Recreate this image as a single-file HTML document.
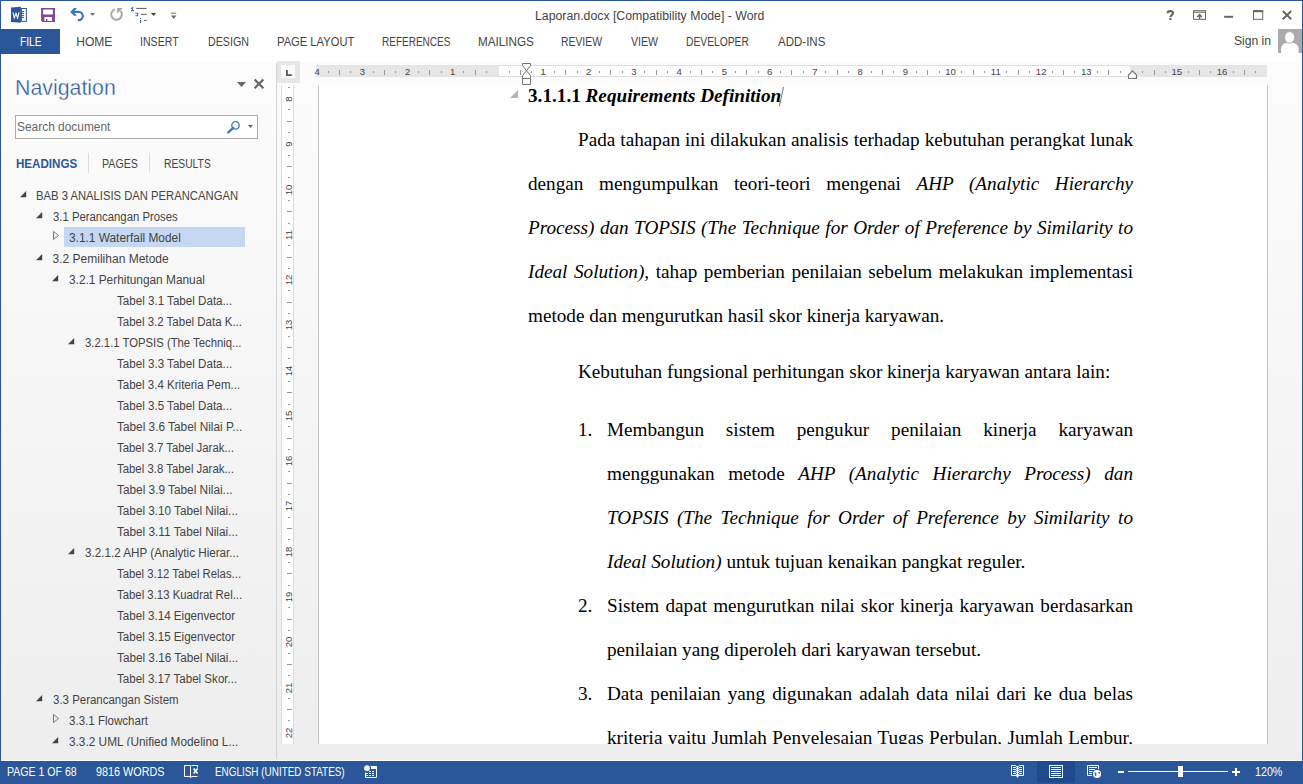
<!DOCTYPE html><html><head><meta charset="utf-8"><title>Word</title><style>
*{margin:0;padding:0;box-sizing:border-box}
html,body{width:1303px;height:784px;overflow:hidden;background:#fff}
body{position:relative;font-family:"Liberation Sans",sans-serif;color:#444}
.abs{position:absolute;white-space:nowrap}
.doc{position:absolute;white-space:nowrap;font-family:"Liberation Serif",serif;font-size:19.2px;line-height:22px;color:#000}
.rn{position:absolute;font-size:9.5px;line-height:10px;color:#444;text-align:center}
.tk{position:absolute;background:#9a9a9a}
</style></head><body>
<div class="abs" style="left:0;top:62px;width:1303px;height:698px;background:linear-gradient(#fcfcfc,#eeeeee)"></div>
<div class="abs" style="left:0;top:0;width:1303px;height:1px;background:#2b579a"></div>
<div class="abs" style="left:0;top:0;width:1px;height:784px;background:#2b579a"></div>
<div class="abs" style="left:1302px;top:0;width:1px;height:784px;background:#2b579a"></div>
<svg class="abs" style="left:0;top:0" width="200" height="29">
<path d="M11 7.6 L20.9 6.8 L20.9 22.7 L11 21.9 Z" fill="#2b579a"/>
<rect x="21.4" y="8.5" width="5" height="12.8" fill="#fff" stroke="#2b579a" stroke-width="1"/>
<path d="M21 11.4 H24 M21 13.4 H24 M21 15.4 H24 M21 17.4 H24" stroke="#2b579a" stroke-width="1"/>
<path d="M12.9 12.4 L14.3 18 L16 13.4 L17.6 18 L19 12.4" fill="none" stroke="#fff" stroke-width="1.1"/>
<path d="M41.1 8 H55 V22 H42.4 L41.1 20.7 Z" fill="#80489d"/>
<rect x="43.1" y="9.5" width="9.8" height="5" rx="0.8" fill="#fff"/>
<rect x="44.4" y="17" width="7.6" height="4" fill="#fff"/>
<rect x="46" y="19" width="1.4" height="2" fill="#80489d"/>
<path d="M74 8.1 L77 8.1 L73.6 11.9 L77 15.7 L74 15.7 L70.1 11.9 Z" fill="#3d77b8"/>
<path d="M72.5 11.9 H78.7 A4.1 4.1 0 0 1 78.7 20.1 H77.8" fill="none" stroke="#3d77b8" stroke-width="2.2"/>
<path d="M90 13 H95 L92.5 15.8 Z" fill="#6a6a6a"/>
<path d="M115.1 9.4 A5.3 5.3 0 1 0 120.4 10.9" fill="none" stroke="#a8a8a8" stroke-width="2"/>
<path d="M117.1 8.1 L122.8 8.1 L117.1 13.7 Z" fill="#a8a8a8"/>
<path d="M131 8.6 L132.6 7.5 V11 M131 10.6 H134" fill="none" stroke="#3d77b8" stroke-width="1.1"/>
<path d="M135.3 13.3 H137.6 V15.7 H135.4" fill="none" stroke="#3d77b8" stroke-width="1.1"/>
<path d="M140.5 18 V19 M140.5 20 V23" stroke="#3d77b8" stroke-width="1.3"/>
<path d="M136.2 8.4 H146.7 M141 14.3 H146.7 M144 20.4 H146.7" stroke="#595959" stroke-width="1"/>
<path d="M150.9 13 H156.2 L153.55 16 Z" fill="#444"/>
<path d="M171 13.2 H176.2" stroke="#6a6a6a" stroke-width="1"/>
<path d="M171 15.6 H176.4 L173.7 19 Z" fill="#6a6a6a"/>
</svg>
<svg class="abs" style="left:1150px;top:0" width="152" height="29">
<path d="M17.6 13.2 C17.6 10.7 23 10.4 23 13.1 C23 15.4 20.4 15 20.4 17.3" fill="none" stroke="#666" stroke-width="2.2"/>
<rect x="19.3" y="18.2" width="2.3" height="1.8" fill="#666"/>
<rect x="43.6" y="10.7" width="12" height="8.6" fill="none" stroke="#666" stroke-width="1"/>
<path d="M43.6 12.2 H55.6" stroke="#666" stroke-width="1"/>
<path d="M49.6 19.2 V14.6 M47.3 16.9 L49.6 14.6 L51.9 16.9" fill="none" stroke="#666" stroke-width="1.4"/>
<rect x="74.1" y="15.8" width="9" height="2" fill="#666"/>
<rect x="103.5" y="10.7" width="9.2" height="8.6" fill="none" stroke="#666" stroke-width="1"/>
<rect x="103" y="10.2" width="10.2" height="2" fill="#666"/>
<path d="M132.8 11 L141.2 19.2 M141.2 11 L132.8 19.2" stroke="#666" stroke-width="1.9"/>
</svg>
<svg class="abs" style="left:1278px;top:29px" width="24" height="24">
<rect x="0" y="0" width="24" height="24" fill="#ababab"/>
<path d="M3 24 V20.5 C3 15.8 6 13.6 11.6 13.6 C17.2 13.6 20.6 15.8 20.6 20.5 V24 Z" fill="#fff"/>
<ellipse cx="11.6" cy="8.4" rx="5" ry="5.8" fill="#fff" stroke="#ababab" stroke-width="0.9"/>
</svg>
<div class="abs" style="left:535.38px;top:10.24px;font:normal normal 12px/12px 'Liberation Sans',sans-serif;color:#444;transform:scaleX(1.0248);transform-origin:0 0;">Laporan.docx [Compatibility Mode] - Word</div>
<div class="abs" style="left:1px;top:29px;width:59px;height:25px;background:#2b579a"></div>
<div class="abs" style="left:19.55px;top:35.54px;font:normal normal 12px/12px 'Liberation Sans',sans-serif;color:#fff;transform:scaleX(0.8547);transform-origin:0 0;">FILE</div>
<div class="abs" style="left:76.30px;top:35.54px;font:normal normal 12px/12px 'Liberation Sans',sans-serif;color:#444;">HOME</div>
<div class="abs" style="left:140.12px;top:35.54px;font:normal normal 12px/12px 'Liberation Sans',sans-serif;color:#444;transform:scaleX(0.8847);transform-origin:0 0;">INSERT</div>
<div class="abs" style="left:207.61px;top:35.54px;font:normal normal 12px/12px 'Liberation Sans',sans-serif;color:#444;transform:scaleX(0.8909);transform-origin:0 0;">DESIGN</div>
<div class="abs" style="left:276.67px;top:35.54px;font:normal normal 12px/12px 'Liberation Sans',sans-serif;color:#444;transform:scaleX(0.9325);transform-origin:0 0;">PAGE LAYOUT</div>
<div class="abs" style="left:381.97px;top:35.54px;font:normal normal 12px/12px 'Liberation Sans',sans-serif;color:#444;transform:scaleX(0.8335);transform-origin:0 0;">REFERENCES</div>
<div class="abs" style="left:478.03px;top:35.54px;font:normal normal 12px/12px 'Liberation Sans',sans-serif;color:#444;transform:scaleX(0.9722);transform-origin:0 0;">MAILINGS</div>
<div class="abs" style="left:561.14px;top:35.54px;font:normal normal 12px/12px 'Liberation Sans',sans-serif;color:#444;transform:scaleX(0.8649);transform-origin:0 0;">REVIEW</div>
<div class="abs" style="left:630.80px;top:35.54px;font:normal normal 12px/12px 'Liberation Sans',sans-serif;color:#444;transform:scaleX(0.8820);transform-origin:0 0;">VIEW</div>
<div class="abs" style="left:686.34px;top:35.54px;font:normal normal 12px/12px 'Liberation Sans',sans-serif;color:#444;transform:scaleX(0.8571);transform-origin:0 0;">DEVELOPER</div>
<div class="abs" style="left:778.20px;top:35.54px;font:normal normal 12px/12px 'Liberation Sans',sans-serif;color:#444;transform:scaleX(0.9600);transform-origin:0 0;">ADD-INS</div>
<div class="abs" style="left:1234.24px;top:34.54px;font:normal normal 12px/12px 'Liberation Sans',sans-serif;color:#444;transform:scaleX(1.0099);transform-origin:0 0;">Sign in</div>
<div class="abs" style="left:14.90px;top:76.58px;font:normal normal 22px/22px 'Liberation Sans',sans-serif;color:#2b579a;transform:scaleX(0.9697);transform-origin:0 0;-webkit-text-stroke:0.35px #fcfcfc;">Navigation</div>
<div class="abs" style="left:15px;top:115px;width:243px;height:24px;border:1px solid #ababab;background:#fff"></div>
<div class="abs" style="left:17.46px;top:120.84px;font:normal normal 12px/12px 'Liberation Sans',sans-serif;color:#666;transform:scaleX(0.9930);transform-origin:0 0;">Search document</div>
<svg class="abs" style="left:225px;top:72px" width="50" height="24">
<path d="M12 10 H21 L16.5 15 Z" fill="#666"/>
<path d="M29.6 7.5 L38.4 16.3 M38.4 7.5 L29.6 16.3" stroke="#666" stroke-width="2.3"/>
</svg>
<svg class="abs" style="left:220px;top:115px" width="40" height="24">
<circle cx="15.5" cy="10.4" r="3.7" fill="none" stroke="#3c77b9" stroke-width="1.3"/>
<path d="M13.2 12.8 L8.3 17.4" stroke="#3c77b9" stroke-width="2.3" stroke-linecap="round"/>
<path d="M28 10 H33 L30.5 13 Z" fill="#666"/>
</svg>
<div class="abs" style="left:15.78px;top:157.64px;font:normal bold 12px/12px 'Liberation Sans',sans-serif;color:#2b579a;transform:scaleX(0.9661);transform-origin:0 0;">HEADINGS</div>
<div class="abs" style="left:88px;top:153px;width:1px;height:20px;background:#ddd"></div>
<div class="abs" style="left:101.51px;top:157.74px;font:normal normal 12px/12px 'Liberation Sans',sans-serif;color:#444;transform:scaleX(0.8872);transform-origin:0 0;">PAGES</div>
<div class="abs" style="left:149px;top:153px;width:1px;height:20px;background:#ddd"></div>
<div class="abs" style="left:163.54px;top:157.74px;font:normal normal 12px/12px 'Liberation Sans',sans-serif;color:#444;transform:scaleX(0.8585);transform-origin:0 0;">RESULTS</div>
<div class="abs" style="left:0px;top:185px;width:276px;height:561px;overflow:hidden">
<div class="abs" style="left:64px;top:42px;width:181px;height:20px;background:#c5d7f1"></div>
<div class="abs" style="left:36.16px;top:4.84px;font:normal normal 12px/12px 'Liberation Sans',sans-serif;color:#444;transform:scaleX(0.9379);transform-origin:0 0;">BAB 3 ANALISIS DAN PERANCANGAN</div>
<svg class="abs" style="left:20px;top:6px" width="8" height="8"><path d="M6.2 0 L6.2 6.2 L0 6.2 Z" fill="#444"/></svg>
<div class="abs" style="left:52.63px;top:25.84px;font:normal normal 12px/12px 'Liberation Sans',sans-serif;color:#444;transform:scaleX(0.9435);transform-origin:0 0;">3.1 Perancangan Proses</div>
<svg class="abs" style="left:36px;top:27px" width="8" height="8"><path d="M6.2 0 L6.2 6.2 L0 6.2 Z" fill="#444"/></svg>
<div class="abs" style="left:68.60px;top:46.84px;font:normal normal 12px/12px 'Liberation Sans',sans-serif;color:#444;transform:scaleX(0.9901);transform-origin:0 0;">3.1.1 Waterfall Model</div>
<svg class="abs" style="left:52.7px;top:46.4px" width="8" height="10"><path d="M0.5 0.5 L5.5 4.5 L0.5 8.5 Z" fill="none" stroke="#777"/></svg>
<div class="abs" style="left:52.60px;top:67.84px;font:normal normal 12px/12px 'Liberation Sans',sans-serif;color:#444;">3.2 Pemilihan Metode</div>
<svg class="abs" style="left:36px;top:69px" width="8" height="8"><path d="M6.2 0 L6.2 6.2 L0 6.2 Z" fill="#444"/></svg>
<div class="abs" style="left:68.61px;top:88.84px;font:normal normal 12px/12px 'Liberation Sans',sans-serif;color:#444;transform:scaleX(0.9890);transform-origin:0 0;">3.2.1 Perhitungan Manual</div>
<svg class="abs" style="left:52px;top:90px" width="8" height="8"><path d="M6.2 0 L6.2 6.2 L0 6.2 Z" fill="#444"/></svg>
<div class="abs" style="left:116.86px;top:109.84px;font:normal normal 12px/12px 'Liberation Sans',sans-serif;color:#444;transform:scaleX(0.9669);transform-origin:0 0;">Tabel 3.1 Tabel Data...</div>
<div class="abs" style="left:116.86px;top:130.84px;font:normal normal 12px/12px 'Liberation Sans',sans-serif;color:#444;transform:scaleX(0.9575);transform-origin:0 0;">Tabel 3.2 Tabel Data K...</div>
<div class="abs" style="left:84.63px;top:151.84px;font:normal normal 12px/12px 'Liberation Sans',sans-serif;color:#444;transform:scaleX(0.9418);transform-origin:0 0;">3.2.1.1 TOPSIS (The Techniq...</div>
<svg class="abs" style="left:68px;top:153px" width="8" height="8"><path d="M6.2 0 L6.2 6.2 L0 6.2 Z" fill="#444"/></svg>
<div class="abs" style="left:116.86px;top:172.84px;font:normal normal 12px/12px 'Liberation Sans',sans-serif;color:#444;transform:scaleX(0.9669);transform-origin:0 0;">Tabel 3.3 Tabel Data...</div>
<div class="abs" style="left:116.86px;top:193.84px;font:normal normal 12px/12px 'Liberation Sans',sans-serif;color:#444;transform:scaleX(0.9617);transform-origin:0 0;">Tabel 3.4 Kriteria Pem...</div>
<div class="abs" style="left:116.86px;top:214.84px;font:normal normal 12px/12px 'Liberation Sans',sans-serif;color:#444;transform:scaleX(0.9669);transform-origin:0 0;">Tabel 3.5 Tabel Data...</div>
<div class="abs" style="left:116.85px;top:235.84px;font:normal normal 12px/12px 'Liberation Sans',sans-serif;color:#444;transform:scaleX(0.9861);transform-origin:0 0;">Tabel 3.6 Tabel Nilai P...</div>
<div class="abs" style="left:116.86px;top:256.84px;font:normal normal 12px/12px 'Liberation Sans',sans-serif;color:#444;transform:scaleX(0.9492);transform-origin:0 0;">Tabel 3.7 Tabel Jarak...</div>
<div class="abs" style="left:116.86px;top:277.84px;font:normal normal 12px/12px 'Liberation Sans',sans-serif;color:#444;transform:scaleX(0.9492);transform-origin:0 0;">Tabel 3.8 Tabel Jarak...</div>
<div class="abs" style="left:116.85px;top:298.84px;font:normal normal 12px/12px 'Liberation Sans',sans-serif;color:#444;transform:scaleX(0.9853);transform-origin:0 0;">Tabel 3.9 Tabel Nilai...</div>
<div class="abs" style="left:116.86px;top:319.84px;font:normal normal 12px/12px 'Liberation Sans',sans-serif;color:#444;transform:scaleX(0.9760);transform-origin:0 0;">Tabel 3.10 Tabel Nilai...</div>
<div class="abs" style="left:116.85px;top:340.84px;font:normal normal 12px/12px 'Liberation Sans',sans-serif;color:#444;transform:scaleX(0.9840);transform-origin:0 0;">Tabel 3.11 Tabel Nilai...</div>
<div class="abs" style="left:84.61px;top:361.84px;font:normal normal 12px/12px 'Liberation Sans',sans-serif;color:#444;transform:scaleX(0.9718);transform-origin:0 0;">3.2.1.2 AHP (Analytic Hierar...</div>
<svg class="abs" style="left:68px;top:363px" width="8" height="8"><path d="M6.2 0 L6.2 6.2 L0 6.2 Z" fill="#444"/></svg>
<div class="abs" style="left:116.86px;top:382.84px;font:normal normal 12px/12px 'Liberation Sans',sans-serif;color:#444;transform:scaleX(0.9454);transform-origin:0 0;">Tabel 3.12 Tabel Relas...</div>
<div class="abs" style="left:116.86px;top:403.84px;font:normal normal 12px/12px 'Liberation Sans',sans-serif;color:#444;transform:scaleX(0.9476);transform-origin:0 0;">Tabel 3.13 Kuadrat Rel...</div>
<div class="abs" style="left:116.86px;top:424.84px;font:normal normal 12px/12px 'Liberation Sans',sans-serif;color:#444;transform:scaleX(0.9679);transform-origin:0 0;">Tabel 3.14 Eigenvector</div>
<div class="abs" style="left:116.86px;top:445.84px;font:normal normal 12px/12px 'Liberation Sans',sans-serif;color:#444;transform:scaleX(0.9679);transform-origin:0 0;">Tabel 3.15 Eigenvector</div>
<div class="abs" style="left:116.86px;top:466.84px;font:normal normal 12px/12px 'Liberation Sans',sans-serif;color:#444;transform:scaleX(0.9792);transform-origin:0 0;">Tabel 3.16 Tabel Nilai...</div>
<div class="abs" style="left:116.86px;top:487.84px;font:normal normal 12px/12px 'Liberation Sans',sans-serif;color:#444;transform:scaleX(0.9652);transform-origin:0 0;">Tabel 3.17 Tabel Skor...</div>
<div class="abs" style="left:52.62px;top:508.84px;font:normal normal 12px/12px 'Liberation Sans',sans-serif;color:#444;transform:scaleX(0.9559);transform-origin:0 0;">3.3 Perancangan Sistem</div>
<svg class="abs" style="left:36px;top:510px" width="8" height="8"><path d="M6.2 0 L6.2 6.2 L0 6.2 Z" fill="#444"/></svg>
<div class="abs" style="left:68.62px;top:529.84px;font:normal normal 12px/12px 'Liberation Sans',sans-serif;color:#444;transform:scaleX(0.9632);transform-origin:0 0;">3.3.1 Flowchart</div>
<svg class="abs" style="left:52.7px;top:529.4px" width="8" height="10"><path d="M0.5 0.5 L5.5 4.5 L0.5 8.5 Z" fill="none" stroke="#777"/></svg>
<div class="abs" style="left:68.61px;top:550.84px;font:normal normal 12px/12px 'Liberation Sans',sans-serif;color:#444;transform:scaleX(0.9865);transform-origin:0 0;">3.3.2 UML (Unified Modeling L...</div>
<svg class="abs" style="left:52px;top:552px" width="8" height="8"><path d="M6.2 0 L6.2 6.2 L0 6.2 Z" fill="#444"/></svg>
</div>
<div class="abs" style="left:276px;top:63px;width:1px;height:696px;background:#d4d4d4"></div>
<div class="abs" style="left:277px;top:61px;width:23px;height:22px;background:#e6e6e6"></div>
<div class="abs" style="left:281px;top:65px;width:14px;height:13px;background:#fafafa"></div>
<svg class="abs" style="left:285px;top:70px" width="8" height="7"><path d="M1.9 0 V5.1 H6.8" fill="none" stroke="#555" stroke-width="1.8"/></svg>
<div class="abs" style="left:316px;top:65px;width:951px;height:12px;background:#e6e6e6"></div>
<div class="abs" style="left:499px;top:65px;width:631px;height:12px;background:#fff;border-top:1px solid #dedede;border-bottom:1px solid #dedede"></div>

<div class="abs" style="left:314.44px;top:67.06px;font:normal normal 9.5px/9.5px 'Liberation Sans',sans-serif;color:#444;">4</div>
<div class="tk" style="left:328px;top:71px;width:1px;height:2px"></div>
<div class="tk" style="left:339px;top:70px;width:1px;height:5px"></div>
<div class="tk" style="left:350px;top:71px;width:1px;height:2px"></div>

<div class="abs" style="left:359.70px;top:67.06px;font:normal normal 9.5px/9.5px 'Liberation Sans',sans-serif;color:#444;">3</div>
<div class="tk" style="left:373px;top:71px;width:1px;height:2px"></div>
<div class="tk" style="left:384px;top:70px;width:1px;height:5px"></div>
<div class="tk" style="left:395px;top:71px;width:1px;height:2px"></div>

<div class="abs" style="left:404.96px;top:67.06px;font:normal normal 9.5px/9.5px 'Liberation Sans',sans-serif;color:#444;">2</div>
<div class="tk" style="left:418px;top:71px;width:1px;height:2px"></div>
<div class="tk" style="left:429px;top:70px;width:1px;height:5px"></div>
<div class="tk" style="left:441px;top:71px;width:1px;height:2px"></div>

<div class="abs" style="left:450.09px;top:67.06px;font:normal normal 9.5px/9.5px 'Liberation Sans',sans-serif;color:#444;">1</div>
<div class="tk" style="left:463px;top:71px;width:1px;height:2px"></div>
<div class="tk" style="left:475px;top:70px;width:1px;height:5px"></div>
<div class="tk" style="left:486px;top:71px;width:1px;height:2px"></div>
<div class="tk" style="left:509px;top:71px;width:1px;height:2px"></div>
<div class="tk" style="left:520px;top:70px;width:1px;height:5px"></div>
<div class="tk" style="left:531px;top:71px;width:1px;height:2px"></div>

<div class="abs" style="left:540.61px;top:67.06px;font:normal normal 9.5px/9.5px 'Liberation Sans',sans-serif;color:#444;">1</div>
<div class="tk" style="left:554px;top:71px;width:1px;height:2px"></div>
<div class="tk" style="left:565px;top:70px;width:1px;height:5px"></div>
<div class="tk" style="left:577px;top:71px;width:1px;height:2px"></div>

<div class="abs" style="left:586.00px;top:67.06px;font:normal normal 9.5px/9.5px 'Liberation Sans',sans-serif;color:#444;">2</div>
<div class="tk" style="left:599px;top:71px;width:1px;height:2px"></div>
<div class="tk" style="left:610px;top:70px;width:1px;height:5px"></div>
<div class="tk" style="left:622px;top:71px;width:1px;height:2px"></div>

<div class="abs" style="left:631.25px;top:67.06px;font:normal normal 9.5px/9.5px 'Liberation Sans',sans-serif;color:#444;">3</div>
<div class="tk" style="left:644px;top:71px;width:1px;height:2px"></div>
<div class="tk" style="left:656px;top:70px;width:1px;height:5px"></div>
<div class="tk" style="left:667px;top:71px;width:1px;height:2px"></div>

<div class="abs" style="left:676.51px;top:67.06px;font:normal normal 9.5px/9.5px 'Liberation Sans',sans-serif;color:#444;">4</div>
<div class="tk" style="left:690px;top:71px;width:1px;height:2px"></div>
<div class="tk" style="left:701px;top:70px;width:1px;height:5px"></div>
<div class="tk" style="left:712px;top:71px;width:1px;height:2px"></div>

<div class="abs" style="left:721.77px;top:67.06px;font:normal normal 9.5px/9.5px 'Liberation Sans',sans-serif;color:#444;">5</div>
<div class="tk" style="left:735px;top:71px;width:1px;height:2px"></div>
<div class="tk" style="left:746px;top:70px;width:1px;height:5px"></div>
<div class="tk" style="left:758px;top:71px;width:1px;height:2px"></div>

<div class="abs" style="left:767.04px;top:67.06px;font:normal normal 9.5px/9.5px 'Liberation Sans',sans-serif;color:#444;">6</div>
<div class="tk" style="left:780px;top:71px;width:1px;height:2px"></div>
<div class="tk" style="left:791px;top:70px;width:1px;height:5px"></div>
<div class="tk" style="left:803px;top:71px;width:1px;height:2px"></div>

<div class="abs" style="left:812.30px;top:67.06px;font:normal normal 9.5px/9.5px 'Liberation Sans',sans-serif;color:#444;">7</div>
<div class="tk" style="left:825px;top:71px;width:1px;height:2px"></div>
<div class="tk" style="left:837px;top:70px;width:1px;height:5px"></div>
<div class="tk" style="left:848px;top:71px;width:1px;height:2px"></div>

<div class="abs" style="left:857.56px;top:67.06px;font:normal normal 9.5px/9.5px 'Liberation Sans',sans-serif;color:#444;">8</div>
<div class="tk" style="left:871px;top:71px;width:1px;height:2px"></div>
<div class="tk" style="left:882px;top:70px;width:1px;height:5px"></div>
<div class="tk" style="left:893px;top:71px;width:1px;height:2px"></div>

<div class="abs" style="left:902.82px;top:67.06px;font:normal normal 9.5px/9.5px 'Liberation Sans',sans-serif;color:#444;">9</div>
<div class="tk" style="left:916px;top:71px;width:1px;height:2px"></div>
<div class="tk" style="left:927px;top:70px;width:1px;height:5px"></div>
<div class="tk" style="left:939px;top:71px;width:1px;height:2px"></div>

<div class="abs" style="left:945.20px;top:67.06px;font:normal normal 9.5px/9.5px 'Liberation Sans',sans-serif;color:#444;">10</div>
<div class="tk" style="left:961px;top:71px;width:1px;height:2px"></div>
<div class="tk" style="left:973px;top:70px;width:1px;height:5px"></div>
<div class="tk" style="left:984px;top:71px;width:1px;height:2px"></div>

<div class="abs" style="left:990.84px;top:67.06px;font:normal normal 9.5px/9.5px 'Liberation Sans',sans-serif;color:#444;">11</div>
<div class="tk" style="left:1006px;top:71px;width:1px;height:2px"></div>
<div class="tk" style="left:1018px;top:70px;width:1px;height:5px"></div>
<div class="tk" style="left:1029px;top:71px;width:1px;height:2px"></div>

<div class="abs" style="left:1035.85px;top:67.06px;font:normal normal 9.5px/9.5px 'Liberation Sans',sans-serif;color:#444;">12</div>
<div class="tk" style="left:1052px;top:71px;width:1px;height:2px"></div>
<div class="tk" style="left:1063px;top:70px;width:1px;height:5px"></div>
<div class="tk" style="left:1074px;top:71px;width:1px;height:2px"></div>

<div class="abs" style="left:1080.98px;top:67.06px;font:normal normal 9.5px/9.5px 'Liberation Sans',sans-serif;color:#444;">13</div>
<div class="tk" style="left:1097px;top:71px;width:1px;height:2px"></div>
<div class="tk" style="left:1108px;top:70px;width:1px;height:5px"></div>
<div class="tk" style="left:1120px;top:71px;width:1px;height:2px"></div>
<div class="tk" style="left:1142px;top:71px;width:1px;height:2px"></div>
<div class="tk" style="left:1154px;top:70px;width:1px;height:5px"></div>
<div class="tk" style="left:1165px;top:71px;width:1px;height:2px"></div>

<div class="abs" style="left:1171.50px;top:67.06px;font:normal normal 9.5px/9.5px 'Liberation Sans',sans-serif;color:#444;">15</div>
<div class="tk" style="left:1188px;top:71px;width:1px;height:2px"></div>
<div class="tk" style="left:1199px;top:70px;width:1px;height:5px"></div>
<div class="tk" style="left:1210px;top:71px;width:1px;height:2px"></div>

<div class="abs" style="left:1216.76px;top:67.06px;font:normal normal 9.5px/9.5px 'Liberation Sans',sans-serif;color:#444;">16</div>
<div class="tk" style="left:1233px;top:71px;width:1px;height:2px"></div>
<div class="tk" style="left:1244px;top:70px;width:1px;height:5px"></div>
<div class="tk" style="left:1255px;top:71px;width:1px;height:2px"></div>
<svg class="abs" style="left:518px;top:60px" width="20" height="30">
<path d="M4.5 3.5 H12.5 V5.5 L8.5 10.8 L12.5 15.5 V24.5 H4.5 V15.5 L8.5 10.8 L4.5 5.5 Z" fill="#fff" stroke="#777" stroke-width="1"/>
<path d="M4.5 18.5 H12.5" stroke="#777" stroke-width="1"/>
</svg>
<svg class="abs" style="left:1124px;top:60px" width="24" height="24">
<path d="M8.5 10.9 L12.5 15 V18.5 H8.5 H4.5 V15 Z" fill="#fff" stroke="#777" stroke-width="1.2"/>
</svg>
<div class="abs" style="left:281px;top:85px;width:13px;height:659px;background:#fff;border-left:1px solid #dedede;border-right:1px solid #dedede"></div>
<div class="tk" style="left:288px;top:87px;width:2px;height:1px"></div>
<div class="rn" style="left:279px;top:94.1px;width:20px;transform:rotate(-90deg)">8</div>
<div class="tk" style="left:288px;top:109px;width:2px;height:1px"></div>
<div class="tk" style="left:287px;top:121px;width:5px;height:1px"></div>
<div class="tk" style="left:288px;top:132px;width:2px;height:1px"></div>
<div class="rn" style="left:279px;top:139.4px;width:20px;transform:rotate(-90deg)">9</div>
<div class="tk" style="left:288px;top:155px;width:2px;height:1px"></div>
<div class="tk" style="left:287px;top:166px;width:5px;height:1px"></div>
<div class="tk" style="left:288px;top:177px;width:2px;height:1px"></div>
<div class="rn" style="left:279px;top:184.6px;width:20px;transform:rotate(-90deg)">10</div>
<div class="tk" style="left:288px;top:200px;width:2px;height:1px"></div>
<div class="tk" style="left:287px;top:211px;width:5px;height:1px"></div>
<div class="tk" style="left:288px;top:223px;width:2px;height:1px"></div>
<div class="rn" style="left:279px;top:229.9px;width:20px;transform:rotate(-90deg)">11</div>
<div class="tk" style="left:288px;top:245px;width:2px;height:1px"></div>
<div class="tk" style="left:287px;top:257px;width:5px;height:1px"></div>
<div class="tk" style="left:288px;top:268px;width:2px;height:1px"></div>
<div class="rn" style="left:279px;top:275.1px;width:20px;transform:rotate(-90deg)">12</div>
<div class="tk" style="left:288px;top:290px;width:2px;height:1px"></div>
<div class="tk" style="left:287px;top:302px;width:5px;height:1px"></div>
<div class="tk" style="left:288px;top:313px;width:2px;height:1px"></div>
<div class="rn" style="left:279px;top:320.4px;width:20px;transform:rotate(-90deg)">13</div>
<div class="tk" style="left:288px;top:336px;width:2px;height:1px"></div>
<div class="tk" style="left:287px;top:347px;width:5px;height:1px"></div>
<div class="tk" style="left:288px;top:358px;width:2px;height:1px"></div>
<div class="rn" style="left:279px;top:365.7px;width:20px;transform:rotate(-90deg)">14</div>
<div class="tk" style="left:288px;top:381px;width:2px;height:1px"></div>
<div class="tk" style="left:287px;top:392px;width:5px;height:1px"></div>
<div class="tk" style="left:288px;top:404px;width:2px;height:1px"></div>
<div class="rn" style="left:279px;top:410.9px;width:20px;transform:rotate(-90deg)">15</div>
<div class="tk" style="left:288px;top:426px;width:2px;height:1px"></div>
<div class="tk" style="left:287px;top:438px;width:5px;height:1px"></div>
<div class="tk" style="left:288px;top:449px;width:2px;height:1px"></div>
<div class="rn" style="left:279px;top:456.2px;width:20px;transform:rotate(-90deg)">16</div>
<div class="tk" style="left:288px;top:471px;width:2px;height:1px"></div>
<div class="tk" style="left:287px;top:483px;width:5px;height:1px"></div>
<div class="tk" style="left:288px;top:494px;width:2px;height:1px"></div>
<div class="rn" style="left:279px;top:501.4px;width:20px;transform:rotate(-90deg)">17</div>
<div class="tk" style="left:288px;top:517px;width:2px;height:1px"></div>
<div class="tk" style="left:287px;top:528px;width:5px;height:1px"></div>
<div class="tk" style="left:288px;top:539px;width:2px;height:1px"></div>
<div class="rn" style="left:279px;top:546.7px;width:20px;transform:rotate(-90deg)">18</div>
<div class="tk" style="left:288px;top:562px;width:2px;height:1px"></div>
<div class="tk" style="left:287px;top:573px;width:5px;height:1px"></div>
<div class="tk" style="left:288px;top:585px;width:2px;height:1px"></div>
<div class="rn" style="left:279px;top:592.0px;width:20px;transform:rotate(-90deg)">19</div>
<div class="tk" style="left:288px;top:607px;width:2px;height:1px"></div>
<div class="tk" style="left:287px;top:619px;width:5px;height:1px"></div>
<div class="tk" style="left:288px;top:630px;width:2px;height:1px"></div>
<div class="rn" style="left:279px;top:637.2px;width:20px;transform:rotate(-90deg)">20</div>
<div class="tk" style="left:288px;top:653px;width:2px;height:1px"></div>
<div class="tk" style="left:287px;top:664px;width:5px;height:1px"></div>
<div class="tk" style="left:288px;top:675px;width:2px;height:1px"></div>
<div class="rn" style="left:279px;top:682.5px;width:20px;transform:rotate(-90deg)">21</div>
<div class="tk" style="left:288px;top:698px;width:2px;height:1px"></div>
<div class="tk" style="left:287px;top:709px;width:5px;height:1px"></div>
<div class="tk" style="left:288px;top:720px;width:2px;height:1px"></div>
<div class="rn" style="left:279px;top:727.7px;width:20px;transform:rotate(-90deg)">22</div>
<div class="abs" style="left:318px;top:85px;width:950px;height:659px;background:#fff;border-left:1px solid #c6c6c6;border-right:1px solid #c6c6c6"></div>
<div class="abs" style="left:319px;top:85px;width:948px;height:659px;overflow:hidden">
<div class="doc" style="left:209px;top:0px;font-weight:bold">3.1.1.1 <i>Requirements Definition</i></div>
<svg class="abs" style="left:191px;top:5px" width="9" height="9"><path d="M8 0 V8 H0 Z" fill="#b4b4b4"/></svg>
<div class="abs" style="left:462px;top:2px;width:1px;height:19px;background:#777;transform:skewX(-12deg)"></div>
<div class="doc" style="left:259px;top:44px;width:555px;text-align:justify;text-align-last:justify">Pada tahapan ini dilakukan analisis terhadap kebutuhan perangkat lunak</div>
<div class="doc" style="left:209px;top:88px;width:605px;text-align:justify;text-align-last:justify">dengan mengumpulkan teori-teori mengenai <i>AHP (Analytic Hierarchy</i></div>
<div class="doc" style="left:209px;top:132px;width:605px;text-align:justify;text-align-last:justify"><i>Process) dan TOPSIS (The Technique for Order of Preference by Similarity to</i></div>
<div class="doc" style="left:209px;top:176px;width:605px;text-align:justify;text-align-last:justify"><i>Ideal Solution)</i>, tahap pemberian penilaian sebelum melakukan implementasi</div>
<div class="doc" style="left:209px;top:220px">metode dan mengurutkan hasil skor kinerja karyawan.</div>
<div class="doc" style="left:259px;top:276px">Kebutuhan fungsional perhitungan skor kinerja karyawan antara lain:</div>
<div class="doc" style="left:259px;top:334px">1.</div>
<div class="doc" style="left:288px;top:334px;width:526px;text-align:justify;text-align-last:justify">Membangun sistem pengukur penilaian kinerja karyawan</div>
<div class="doc" style="left:288px;top:378px;width:526px;text-align:justify;text-align-last:justify">menggunakan metode <i>AHP (Analytic Hierarchy Process) dan</i></div>
<div class="doc" style="left:288px;top:422px;width:526px;text-align:justify;text-align-last:justify"><i>TOPSIS (The Technique for Order of Preference by Similarity to</i></div>
<div class="doc" style="left:288px;top:466px"><i>Ideal Solution)</i> untuk tujuan kenaikan pangkat reguler.</div>
<div class="doc" style="left:259px;top:510px">2.</div>
<div class="doc" style="left:288px;top:510px;width:526px;text-align:justify;text-align-last:justify">Sistem dapat mengurutkan nilai skor kinerja karyawan berdasarkan</div>
<div class="doc" style="left:288px;top:554px">penilaian yang diperoleh dari karyawan tersebut.</div>
<div class="doc" style="left:259px;top:598px">3.</div>
<div class="doc" style="left:288px;top:598px;width:526px;text-align:justify;text-align-last:justify">Data penilaian yang digunakan adalah data nilai dari ke dua belas</div>
<div class="doc" style="left:288px;top:642px;width:526px;text-align:justify;text-align-last:justify">kriteria yaitu Jumlah Penyelesaian Tugas Perbulan, Jumlah Lembur,</div>
</div>
<div class="abs" style="left:0;top:761px;width:1303px;height:23px;background:#2b579a"></div>
<div class="abs" style="left:7.42px;top:765.74px;font:normal normal 12px/12px 'Liberation Sans',sans-serif;color:#fff;transform:scaleX(0.8797);transform-origin:0 0;">PAGE 1 OF 68</div>
<div class="abs" style="left:95.55px;top:765.74px;font:normal normal 12px/12px 'Liberation Sans',sans-serif;color:#fff;transform:scaleX(0.9013);transform-origin:0 0;">9816 WORDS</div>
<div class="abs" style="left:214.67px;top:765.74px;font:normal normal 12px/12px 'Liberation Sans',sans-serif;color:#fff;transform:scaleX(0.8264);transform-origin:0 0;">ENGLISH (UNITED STATES)</div>
<svg class="abs" style="left:0;top:761px" width="1303" height="23">
<g fill="none" stroke="#fff" stroke-width="1">
<path d="M190.5 4.5 H184.5 V15.5 H190.5 M190.5 4.5 V16.5 M191.5 4.5 H197.5 V6.5 M191.5 15.5 H197.5"/>
<path d="M188.8 14.8 L190.5 16.8 L192.2 14.8"/>
<path d="M193.6 7.6 L197.6 12.6 M197.6 7.6 L193.6 12.6" stroke-width="1.6"/>
<path d="M365.5 11.5 V16.5 H376.5 V5.5 H370.5"/>
</g>
<rect x="371" y="5" width="5.5" height="3" fill="#fff"/>
<circle cx="367" cy="7.2" r="2.9" fill="#eef2f8"/>
<g fill="#fff">
<rect x="369" y="10" width="2" height="1"/><rect x="372" y="10" width="2" height="1"/>
<rect x="366" y="12" width="2" height="1"/><rect x="369" y="12" width="2" height="1"/><rect x="372" y="12" width="2" height="1"/>
<rect x="366" y="14" width="2" height="1"/><rect x="369" y="14" width="2" height="1"/><rect x="372" y="14" width="2" height="1"/>
</g>
<g fill="none" stroke="#fff" stroke-width="1">
<path d="M1015.8 4.5 H1011.5 V14.5 H1016 M1019 4.5 H1023.5 V14.5 H1019"/>
<path d="M1013 6.5 H1016 M1013 8.5 H1016 M1013 10.5 H1016 M1013 12.5 H1016 M1019 6.5 H1022 M1019 8.5 H1022 M1019 10.5 H1022 M1019 12.5 H1022"/>
</g>
<path d="M1016.2 5 H1018.8 V15 L1017.5 17 L1016.2 15 Z" fill="#fff"/>
<path d="M1016.3 6.5 H1017 M1018 6.5 H1018.7 M1016.3 8.5 H1017 M1018 8.5 H1018.7 M1016.3 10.5 H1017 M1018 10.5 H1018.7 M1016.3 12.5 H1017 M1018 12.5 H1018.7" stroke="#2b579a" stroke-width="1"/>
<rect x="1037" y="0" width="38" height="21.6" fill="#1f4b8c"/>
<g fill="none" stroke="#fff" stroke-width="1">
<rect x="1049.5" y="4.5" width="13" height="12"/>
<path d="M1051 6.5 H1061 M1051 8.5 H1061 M1051 10.5 H1061 M1051 12.5 H1061 M1051 14.5 H1061"/>
<path d="M1091.8 14.5 H1087.5 V4.5 H1098.5 V8"/>
<path d="M1089 6.5 H1097 M1089 8.5 H1095 M1089 10.5 H1092.5 M1089 12.5 H1091.8"/>
</g>
<circle cx="1097" cy="13" r="4.1" fill="#fff"/>
<path d="M1094.5 11.2 L1096.2 11.6 L1096.4 14.6 L1095 15.4 Z M1097.6 11.4 L1099.8 10.8 L1100.2 13 Z" fill="#3e68a8"/>
<rect x="1118" y="10" width="6" height="2" fill="#fff"/>
<rect x="1128" y="10" width="100" height="1" fill="#fff"/>
<rect x="1178" y="5" width="5" height="11" fill="#fff"/>
<rect x="1232" y="10" width="8" height="2" fill="#fff"/>
<rect x="1235" y="7" width="2" height="8" fill="#fff"/>
</svg>
<div class="abs" style="left:1254.91px;top:766.24px;font:normal normal 12px/12px 'Liberation Sans',sans-serif;color:#fff;transform:scaleX(0.8923);transform-origin:0 0;">120%</div>
</body></html>
